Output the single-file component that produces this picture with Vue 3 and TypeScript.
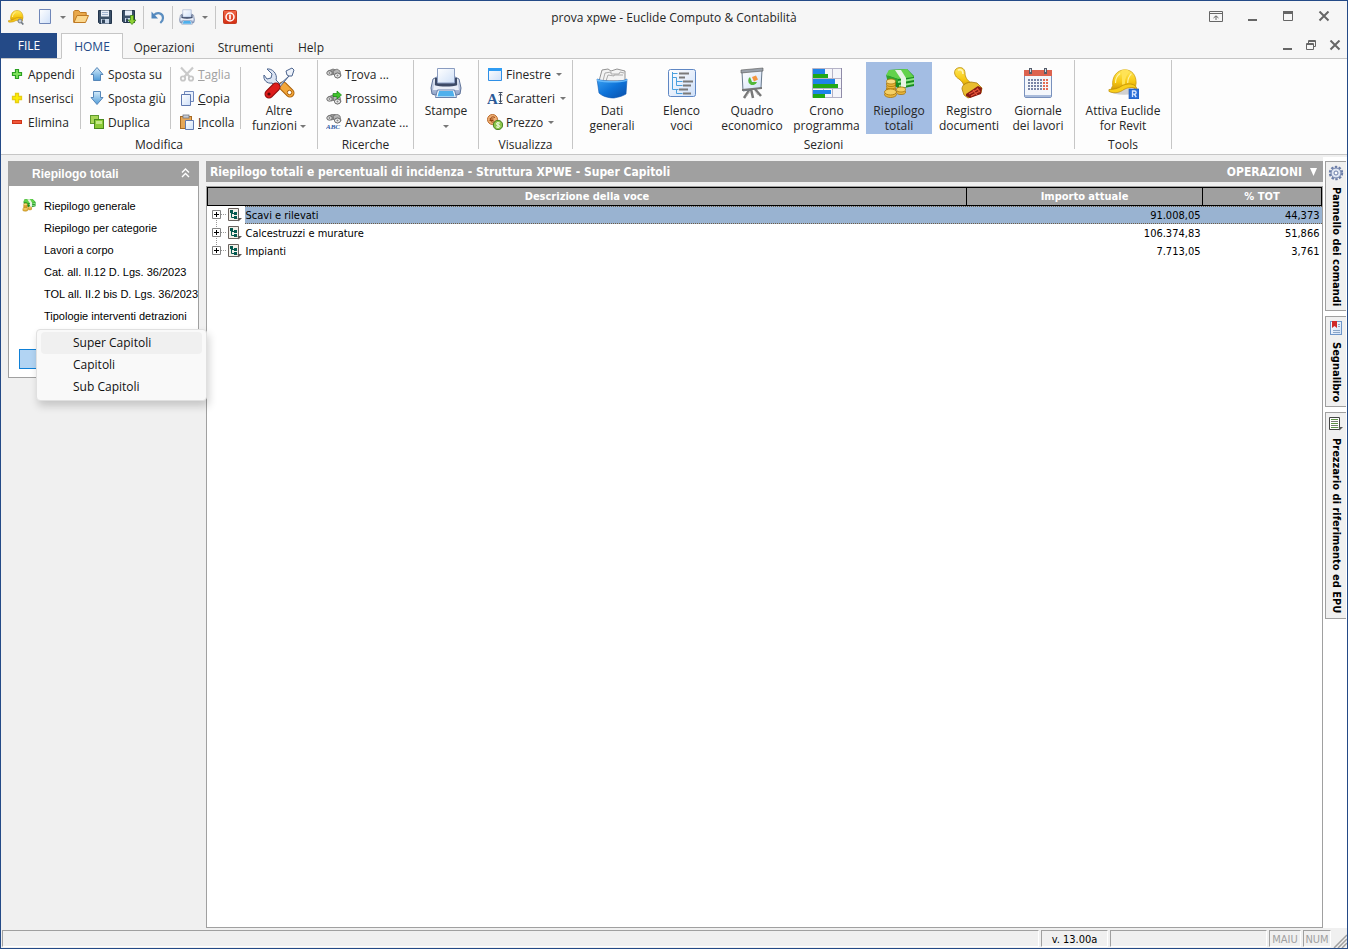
<script setup lang="ts">
import { ref } from 'vue'

interface Action { icon: string; label: string; key?: string; caret?: boolean; disabled?: boolean }
interface Section { icon: string; lines: [string, string]; width: string }
interface Row { name: string; amount: string; percent: string }

const tabs = ['Operazioni', 'Strumenti', 'Help']

const editColumns: Action[][] = [
  [
    { icon: 'plus-green', label: 'Appendi' },
    { icon: 'plus-yellow', label: 'Inserisci' },
    { icon: 'minus', label: 'Elimina' },
  ],
  [
    { icon: 'up', label: 'Sposta su' },
    { icon: 'down', label: 'Sposta giù' },
    { icon: 'duplicate', label: 'Duplica' },
  ],
  [
    { icon: 'cut', label: 'aglia', key: 'T', disabled: true },
    { icon: 'copy', label: 'opia', key: 'C' },
    { icon: 'paste', label: 'ncolla', key: 'I' },
  ],
]

const searchActions: Action[] = [
  { icon: 'find', label: 'Trova ...' },
  { icon: 'find-next', label: 'Prossimo' },
  { icon: 'find-abc', label: 'Avanzate ...' },
]

const viewActions: Action[] = [
  { icon: 'window', label: 'Finestre', caret: true },
  { icon: 'font', label: 'Caratteri', caret: true },
  { icon: 'price', label: 'Prezzo', caret: true },
]

const sections: Section[] = [
  { icon: 'files', lines: ['Dati', 'generali'], width: 'w68' },
  { icon: 'outline', lines: ['Elenco', 'voci'], width: 'w71' },
  { icon: 'board', lines: ['Quadro', 'economico'], width: 'w70' },
  { icon: 'gantt', lines: ['Crono', 'programma'], width: 'w79' },
  { icon: 'money', lines: ['Riepilogo', 'totali'], width: 'w66' },
  { icon: 'stamp', lines: ['Registro', 'documenti'], width: 'w74' },
  { icon: 'calendar', lines: ['Giornale', 'dei lavori'], width: 'w64' },
]
const activeSection = ref('money')

const navItems = [
  'Riepilogo generale',
  'Riepilogo per categorie',
  'Lavori a corpo',
  'Cat. all. II.12 D. Lgs. 36/2023',
  'TOL all. II.2 bis D. Lgs. 36/2023',
  'Tipologie interventi detrazioni',
]

const menuItems = ['Super Capitoli', 'Capitoli', 'Sub Capitoli']
const activeMenu = ref(0)

const rows: Row[] = [
  { name: 'Scavi e rilevati', amount: '91.008,05', percent: '44,373' },
  { name: 'Calcestruzzi e murature', amount: '106.374,83', percent: '51,866' },
  { name: 'Impianti', amount: '7.713,05', percent: '3,761' },
]
const selectedRow = ref(0)

const sideTabs = [
  { icon: 'gear', label: 'Pannello dei comandi' },
  { icon: 'bookmark', label: 'Segnalibro' },
  { icon: 'pricelist', label: 'Prezzario di riferimento ed EPU' },
]
</script>

<template>
  <svg class="sprites" width="0" height="0" aria-hidden="true">
    <defs>
      <linearGradient id="gYellow" x1="0" y1="0" x2="0" y2="1"><stop offset="0" stop-color="#ffe95c" /><stop offset="0.55" stop-color="#f7c812" /><stop offset="1" stop-color="#c98f04" /></linearGradient>
      <linearGradient id="gBlue" x1="0" y1="0" x2="0" y2="1"><stop offset="0" stop-color="#d5ecfa" /><stop offset="1" stop-color="#4f9bd8" /></linearGradient>
      <linearGradient id="gDeep" x1="0" y1="0" x2="1" y2="1"><stop offset="0" stop-color="#3aa0f2" /><stop offset="0.5" stop-color="#0d72d8" /><stop offset="1" stop-color="#0a4ea8" /></linearGradient>
      <linearGradient id="gPaper" x1="0" y1="0" x2="1" y2="1"><stop offset="0" stop-color="#ffffff" /><stop offset="1" stop-color="#cfe0f8" /></linearGradient>
      <linearGradient id="gSteel" x1="0" y1="0" x2="0" y2="1"><stop offset="0" stop-color="#f2f5fb" /><stop offset="1" stop-color="#8fa2c8" /></linearGradient>
      <linearGradient id="gRed" x1="0" y1="0" x2="0" y2="1"><stop offset="0" stop-color="#f26a4a" /><stop offset="1" stop-color="#d32d12" /></linearGradient>
    </defs>

    <symbol id="i-helmet" viewBox="0 0 32 32">
      <ellipse cx="17" cy="26" rx="14" ry="3.500" fill="#9b9b9b" opacity=".45" />
      <path d="M5 20C4 10 10 3 18 3c8 0 12 6 12 14l-1 6c-4-2-9-2-12 0-4 3-9 4-13 3-1-1-1-3 1-6z" fill="url(#gYellow)" stroke="#c99a0b" stroke-width=".8" />
      <path d="M1 24c5 0 10-1 14-4 4-2 10-3 14 0l2 3c-6-2-10-1-14 1-4 3-10 5-16 2z" fill="#f9ce1c" stroke="#b98705" stroke-width=".7" />
      <path d="M14 4c3-2 7-2 9 1-3 3-5 7-5 13l-3 1c0-6 0-11-1-15z" fill="#ffe356" />
      <path d="M8 17c0-5 2-8 5-10M21 17c0-5 2-8 4-10" stroke="#fff3a5" stroke-width="1.200" fill="none" />
    </symbol>
    <symbol id="i-app" viewBox="0 0 16 16">
      <path d="M2.500 10C2.500 5 5 1.500 9 1.500c4 0 6 3 6 7.500l-1 2-6-.5-4 2z" fill="url(#gYellow)" stroke="#d0a010" stroke-width=".6" />
      <path d="M.5 11.500C4 11.500 6 10 8 9c2-.8 5-.8 6.500.5V12L8 11.500c-2 1.500-5 2-7.500 1.500z" fill="#f4c517" stroke="#c08d08" stroke-width=".5" />
      <path d="M4.500 8c0-2.500 1.500-4 3-4.800" stroke="#fff3a5" fill="none" />
      <circle cx="12" cy="12" r="2" fill="#c7ced6" stroke="#78818d" /><path d="M13.300 13.300l2 2.200" stroke="#6d7680" stroke-width="1.700" />
    </symbol>
    <symbol id="i-revit" viewBox="0 0 32 32">
      <use href="#i-helmet" width="32" height="30" />
      <rect x="22" y="22" width="10" height="10" fill="#2c6fd8" stroke="#1c54b4" stroke-width=".6" />
      <path d="M25.500 30v-6h2a1.500 1.500 0 0 1 0 3.200h-2m1.700 0l2 2.800" stroke="#dce9ff" stroke-width="1.300" fill="none" />
    </symbol>
    <symbol id="i-new" viewBox="0 0 16 16"><path d="M2.500 .5h11v14h-11z" fill="url(#gPaper)" stroke="#6f86b8" /></symbol>
    <symbol id="i-open" viewBox="0 0 16 16">
      <path d="M.7 13.500V2.500l1-1h4l1.500 2h6v3" fill="#e9a94c" stroke="#bf7a24" />
      <path d="M1 13.500L4 6.500h11.500l-3 7z" fill="#fbd78d" stroke="#bf7a24" />
    </symbol>
    <symbol id="i-save" viewBox="0 0 16 16">
      <path d="M1.500 1.500h13v13h-12l-1-1z" fill="#3b5068" stroke="#22344b" />
      <path d="M4 1.500h8v6H4z" fill="#e8eef8" /><path d="M4 10h8v4.500H4z" fill="#c9d7ea" /><path d="M5 10.500h3v3.500H5z" fill="#33475f" />
      <path d="M5 3.500h6M5 5.500h6" stroke="#8fa6c6" stroke-width=".8" />
    </symbol>
    <symbol id="i-saveas" viewBox="0 0 16 16">
      <path d="M1.500 1.500h12v12h-11l-1-1z" fill="#3b5068" stroke="#22344b" />
      <path d="M4 1.500h7v5H4z" fill="#e8eef8" /><path d="M4 9h6v4H4z" fill="#c9d7ea" /><path d="M5 9.500h2V13H5z" fill="#33475f" />
      <path d="M9.500 6.500h3V11H15l-4 4.500L7 11h2.500z" fill="#8fd136" stroke="#3f8a12" stroke-width=".8" />
    </symbol>
    <symbol id="i-undo" viewBox="0 0 16 16">
      <path d="M4 6C7 3 13 3.500 13 9c0 2.500-1 3.700-2.700 5" stroke="#5b8ec0" stroke-width="2.200" fill="none" />
      <path d="M1.500 2.500v7h6.500z" fill="#4f86bd" />
    </symbol>
    <symbol id="i-printer" viewBox="0 0 32 32">
      <path d="M3 12l4-2h18l4 2 2 9-1 6-3 1H5l-3-1-1-6z" fill="url(#gSteel)" stroke="#5e7299" />
      <path d="M5 11h22v8c-6 2-16 2-22 0z" fill="#3d4a66" />
      <path d="M7.500 16V1.500h17V16z" fill="url(#gPaper)" stroke="#8a9cc0" />
      <path d="M4 18c7 2 17 2 24 0l1 5H3z" fill="#e9eef8" />
      <path d="M7.500 23h17l2 7.500h-21z" fill="#f8fbff" stroke="#6880ab" />
      <path d="M9 24h14l1.500 5.500h-17z" fill="#4fb0ec" />
    </symbol>
    <symbol id="i-power" viewBox="0 0 16 16">
      <rect x="1.500" y="1.500" width="13" height="13" rx="1" fill="url(#gRed)" stroke="#c43b20" />
      <circle cx="8" cy="8" r="4" fill="none" stroke="#fff" stroke-width="1.500" /><path d="M8 5.500v5" stroke="#fff" stroke-width="1.700" />
    </symbol>
    <symbol id="i-plus-green" viewBox="0 0 16 16"><path d="M6.500 3.500h3v3h3v3h-3v3h-3v-3h-3v-3h3z" fill="#7fe35c" stroke="#2ba022" stroke-width="1.200" /></symbol>
    <symbol id="i-plus-yellow" viewBox="0 0 16 16"><path d="M6.500 3.500h3v3h3v3h-3v3h-3v-3h-3v-3h3z" fill="#fff000" stroke="#e6cd14" stroke-width="1.300" /></symbol>
    <symbol id="i-minus" viewBox="0 0 16 16"><rect x="3.500" y="6.500" width="9" height="3" fill="#f0573a" stroke="#cf3519" /></symbol>
    <symbol id="i-up" viewBox="0 0 16 16"><path d="M8 1.500l6 7h-2.500v6h-7v-6H2z" fill="url(#gBlue)" stroke="#5686b8" /></symbol>
    <symbol id="i-down" viewBox="0 0 16 16"><path d="M8 14.500l6-7h-2.500v-6h-7v6H2z" fill="url(#gBlue)" stroke="#5686b8" /></symbol>
    <symbol id="i-duplicate" viewBox="0 0 16 16">
      <rect x="1.500" y="1.500" width="8" height="8" fill="#a8d657" stroke="#5f9a2d" /><rect x="5.500" y="5.500" width="9" height="9" fill="#8bc936" stroke="#4a8a1d" />
      <path d="M7 7h6v3H7z" fill="#c3e885" />
    </symbol>
    <symbol id="i-cut" viewBox="0 0 16 16">
      <path d="M2 1.500l8.500 9M14 1.500l-8.500 9" stroke="#cacaca" stroke-width="2.200" />
      <circle cx="4" cy="12.500" r="2.200" fill="none" stroke="#c6c6c6" stroke-width="1.800" /><circle cx="12" cy="12.500" r="2.200" fill="none" stroke="#c6c6c6" stroke-width="1.800" />
    </symbol>
    <symbol id="i-copy" viewBox="0 0 16 16"><path d="M5.500 1.500h9v10h-9z" fill="#e8f0fc" stroke="#7088bd" /><path d="M2.500 4.500h9v11h-9z" fill="url(#gPaper)" stroke="#6079b0" /></symbol>
    <symbol id="i-paste" viewBox="0 0 16 16">
      <rect x="1.500" y="2.500" width="11" height="12" fill="#e6a757" stroke="#a76a23" /><rect x="4" y="1" width="6" height="3" fill="#c7cbd4" stroke="#70757f" stroke-width=".8" />
      <path d="M6.500 6.500h8v9h-8z" fill="url(#gPaper)" stroke="#6079b0" />
    </symbol>
    <symbol id="i-tools" viewBox="0 0 32 32">
      <path d="M20 19l7 7" stroke="#a85e06" stroke-width="9" stroke-linecap="round" /><path d="M20 19l7 7" stroke="#f2a63a" stroke-width="7" stroke-linecap="round" />
      <path d="M4 2l5 5-1 4-4 1-3-4c-1 5 3 9 8 8l6 5 3-3-5-5c2-6-4-12-9-11z" fill="#dbe4f3" stroke="#4c648e" />
      <path d="M15 19L26 9l-2-1-1-4 6-3 2 2-2 6-3 0L16 21z" fill="#edf2fa" stroke="#4c648e" />
      <path d="M13 20l-7 7" stroke="#8b0b0b" stroke-width="9" stroke-linecap="round" /><path d="M13 20l-7 7" stroke="#dd1c1c" stroke-width="7" stroke-linecap="round" />
      <circle cx="6" cy="27" r="1.600" fill="#5b0808" /><circle cx="26.500" cy="25.500" r="2.200" fill="#fff" stroke="#a85e06" />
    </symbol>
    <symbol id="i-find" viewBox="0 0 16 16">
      <path d="M2 5l5-2 3 1-1 4-4 1z" fill="#999" stroke="#666" stroke-width=".7" /><path d="M7 5l4-2 3 2 1 5-4 2-3-3z" fill="#b5b5b5" stroke="#666" stroke-width=".7" />
      <ellipse cx="3.500" cy="7" rx="2.700" ry="2.200" fill="#e4e4e4" stroke="#5a5a5a" stroke-width=".9" /><ellipse cx="11.500" cy="9.500" rx="3" ry="2.500" fill="#ececec" stroke="#5a5a5a" stroke-width=".9" />
      <circle cx="11.500" cy="9.500" r="1" fill="#888" /><circle cx="3.500" cy="7" r=".9" fill="#888" />
    </symbol>
    <symbol id="i-find-next" viewBox="0 0 16 16">
      <use href="#i-find" y="2" width="16" height="16" /><path d="M7 3.500h4V1l4.500 4L11 9V6.500H7z" fill="#3fc32b" stroke="#168511" stroke-width=".7" />
    </symbol>
    <symbol id="i-find-abc" viewBox="0 0 16 16"><use href="#i-find" y="-3" width="16" height="16" /></symbol>
    <symbol id="i-window" viewBox="0 0 16 16"><path d="M1.500 2.500h13v12h-13z" fill="url(#gPaper)" stroke="#2f8fe6" /><path d="M1 2h14v3H1z" fill="#2f9cf2" /></symbol>
    <symbol id="i-font" viewBox="0 0 16 16">
      <path d="M13.500 4v8M11.500 2.500h4M11.500 13.500h4M12 5.500l1.500-2 1.500 2M12 10.500l1.500 2 1.500-2" stroke="#3d4b60" fill="none" />
    </symbol>
    <symbol id="i-price" viewBox="0 0 16 16">
      <circle cx="5.500" cy="5.500" r="5" fill="#f0b277" stroke="#b9692a" /><path d="M8 3.500c-3-1.500-4.500 0-4.500 2s1.500 3.500 4 2M2.500 5h4M2.500 6.500h4" stroke="#96410d" fill="none" />
      <circle cx="11" cy="11" r="4.700" fill="#8cc64b" stroke="#437d1f" /><path d="M13 9.200c-2-1-3.700-.5-3.700.7 0 1.500 3.500.8 3.500 2.300 0 1.200-2 1.500-3.800.6M11 8v6" stroke="#f4fbe8" fill="none" />
    </symbol>
    <symbol id="i-files" viewBox="0 0 32 32">
      <path d="M3 14L6 3l6-1 3 2 6-2 8 2v10z" fill="#f3f3f3" stroke="#777" stroke-width=".8" /><path d="M7 14l2-8 6-1v2h8l1-2 4 1M10 14l2-6 6 1v-1h9" fill="none" stroke="#999" stroke-width=".8" />
      <path d="M1 12c5 2 11 2 16 2 6 0 11 0 14-2l-1 15c-3 2-7 3-12 4-6 0-12-2-15-5z" fill="url(#gDeep)" stroke="#0b58b4" stroke-width=".6" />
      <path d="M1 12c5 2 11 2 16 2 6 0 11 0 14-2v2c-8 2-22 2-30 0z" fill="#65b9fb" />
    </symbol>
    <symbol id="i-outline" viewBox="0 0 32 32">
      <rect x="2.500" y="2.500" width="27" height="27" rx="2" fill="url(#gPaper)" stroke="#5f87c4" />
      <path d="M6.500 5v17.500h6M6.500 6.500h5M6.500 10.500h4v8h6M10.500 14.500h6M10.500 22v4.500h6" fill="none" stroke="#4aa0de" />
      <path d="M13 6.500h10M13 10.500h6M17 14.500h10M17 18.500h8M13 22.500h9M17 26.500h8" stroke="#7a7a7a" stroke-width="2" />
    </symbol>
    <symbol id="i-board" viewBox="0 0 32 32">
      <path d="M14 22l-6 9M18 21l7 8M15 22l2 9" stroke="#777" stroke-width="2.500" /><path d="M14 24l-4 6M19 24l3 4" stroke="#bbb" stroke-width="1" />
      <path d="M6 5l20-2-1 18-18 3z" fill="url(#gPaper)" stroke="#68788a" /><path d="M5 3l22-2v3L5 6z" fill="#9ba2ab" stroke="#555" stroke-width=".6" />
      <path d="M14 10a4.500 4.500 0 1 0 7 5h-5z" fill="#51b83b" /><path d="M16 10l4-1.500 2 4-4 2z" fill="#f4953f" /><path d="M6 22l20-2v2L6 24z" fill="#777" />
    </symbol>
    <symbol id="i-gantt" viewBox="0 0 32 32">
      <path d="M1.500 1.500h29v29h-29zM12.500 1v30M21.500 1v30M1 11.500h30M1 21.500h30" fill="#f5f5fa" stroke="#b5b3c7" /><path d="M30.500 1v30" stroke="#8f8ba8" />
      <path d="M2 2h12v5H2zM2 12h22v5H2zM2 23h18v4H2z" fill="#1f83e8" /><path d="M2 7h15v4H2zM2 17h25v4H2zM2 27h12v4H2z" fill="#22a818" />
    </symbol>
    <symbol id="i-money" viewBox="0 0 32 32">
      <path d="M6 3l18-1 7 7v10l-15 3L4 13z" fill="#178c20" /><path d="M6 3l18-1 7 8-16 2L3 8z" fill="#63d24b" /><path d="M15 14l16-3v2l-16 3zM16 18l15-3v2l-15 3z" fill="#8fe487" />
      <path d="M12 3h6l5 8v9l-5 1v-9z" fill="#e9f3e6" /><path d="M3 8l12 4v4L4 12z" fill="#2fa52c" />
      <g fill="#e9b63c" stroke="#a87308" stroke-width=".8">
        <ellipse cx="18" cy="25" rx="4.500" ry="2.500" /><ellipse cx="18" cy="22.500" rx="4.500" ry="2.500" fill="#f5cf64" />
        <ellipse cx="8" cy="22" rx="4.500" ry="2.500" /><ellipse cx="8" cy="19.500" rx="4.500" ry="2.500" /><ellipse cx="8" cy="17" rx="4.500" ry="2.500" /><ellipse cx="8" cy="14.500" rx="4.500" ry="2.500" fill="#f9dc83" />
        <ellipse cx="7.500" cy="27.500" rx="6" ry="3" /><ellipse cx="7.500" cy="25" rx="6" ry="3" fill="#f5cf64" />
      </g>
    </symbol>
    <symbol id="i-stamp" viewBox="0 0 32 32">
      <path d="M3 2c4-3 9-1 9 4 0 4 2 7 6 10l-6 6c-1-5-3-8-6-10C2 10 0 5 3 2z" fill="url(#gYellow)" stroke="#b98a10" stroke-width=".8" />
      <path d="M9 22c0-3 2-6 9-7l6 1 5 5-1 5-13 5-4-3z" fill="#e9bd2f" stroke="#a87a0b" stroke-width=".8" /><path d="M13 27l12-8 4 2-1 6-11 4-4-2z" fill="#8a1a12" />
      <path d="M16 27l9-5M18 29l9-5M20 23l4 5M24 21l3 4" stroke="#e8563c" stroke-width="1.200" /><path d="M5 3c3-1 5 0 5 4" fill="none" stroke="#fff5bd" stroke-width="1.500" />
    </symbol>
    <symbol id="i-calendar" viewBox="0 0 32 32">
      <rect x="2.500" y="3.500" width="27" height="27" rx="1.500" fill="#f4f7fc" stroke="#7991bd" /><path d="M2 3h28v6H2z" fill="#dc6350" /><path d="M3 28h26v2H3z" fill="#a9bbdb" />
      <path d="M6 13h15M6 16h15M6 19h15M6 22h15" stroke="#7884a6" stroke-width="2" stroke-dasharray="2 1" /><path d="M21 13h6M21 16h6M21 19h6M21 22h6" stroke="#e36a55" stroke-width="2" stroke-dasharray="2 1" />
      <path d="M8.500 1v6M23.500 1v6" stroke="#555d6b" stroke-width="3" /><path d="M8.500 2v3M23.500 2v3" stroke="#d5dae3" stroke-width="1" />
    </symbol>
    <symbol id="i-tree" viewBox="0 0 14 14">
      <path d="M.5 .5h10v12H.5z" fill="#f2f0e9" stroke="#6a625e" /><path d="M2 2h3v3H2zM6 4h3v3H6zM6 8h3v3H6z" fill="#04594f" /><path d="M3.500 5v4.500H7M3.500 5.500H7" stroke="#04594f" fill="none" />
      <path d="M9.500 10H14l-3.500 3.500z" fill="#5b5552" />
    </symbol>
    <symbol id="i-gear" viewBox="0 0 16 16">
      <circle cx="8" cy="8" r="6.200" fill="none" stroke="#6b7da8" stroke-width="2" stroke-dasharray="2.400 1.500" /><circle cx="8" cy="8" r="5" fill="#dfe6f3" stroke="#6b7da8" /><circle cx="8" cy="8" r="2" fill="#fff" stroke="#6b7da8" />
    </symbol>
    <symbol id="i-bookmark" viewBox="0 0 16 16">
      <rect x="2.500" y="1.500" width="11" height="13" fill="url(#gPaper)" stroke="#6f96c9" /><path d="M4 1h5v7L6.500 6 4 8z" fill="#d02a2a" /><path d="M10 4.500h2M10 6.500h2M5 10.500h7M5 12.500h7" stroke="#8ba5c7" />
    </symbol>
    <symbol id="i-pricelist" viewBox="0 0 16 16">
      <path d="M1.500 1.500h10v12h-10z" fill="#fff" stroke="#444" /><path d="M3 3.500h7M3 7.500h7M3 11.500h7" stroke="#5c8f45" /><path d="M3 5.500h7M3 9.500h7" stroke="#777" /><path d="M10.500 11H15l-3.500 3.500z" fill="#555" />
    </symbol>
  </svg>

  <div class="window">
    <header class="titlebar">
      <div class="quick">
        <button class="q app" aria-label="Euclide"><svg class="s16"><use href="#i-app" /></svg></button>
        <button class="q new" aria-label="Nuovo"><svg class="s16"><use href="#i-new" /></svg></button>
        <button class="q qc" aria-label="Opzioni nuovo"><i class="caret"></i></button>
        <button class="q wide" aria-label="Apri"><svg class="s16"><use href="#i-open" /></svg></button>
        <button class="q wide" aria-label="Salva"><svg class="s16"><use href="#i-save" /></svg></button>
        <button class="q" aria-label="Salva con nome"><svg class="s16"><use href="#i-saveas" /></svg></button>
        <span class="qsep"></span>
        <button class="q" aria-label="Annulla"><svg class="s16"><use href="#i-undo" /></svg></button>
        <span class="qsep"></span>
        <button class="q new" aria-label="Stampa"><svg class="s16"><use href="#i-printer" /></svg></button>
        <button class="q qc" aria-label="Opzioni stampa"><i class="caret"></i></button>
        <span class="qsep"></span>
        <button class="q" aria-label="Esci"><svg class="s16"><use href="#i-power" /></svg></button>
      </div>
      <div class="title">prova xpwe - Euclide Computo &amp; Contabilità</div>
      <div class="controls">
        <button aria-label="Comprimi barra"><svg width="14" height="12" viewBox="0 0 14 12"><path d="M.5 .5h13v10H.5zM.5 2.500h13M7 9V5M4.500 7L7 4.800 9.500 7" fill="none" stroke="#666" /></svg></button>
        <button aria-label="Riduci"><svg width="12" height="12" viewBox="0 0 12 12"><path d="M2 8h9v2H2z" fill="#666" /></svg></button>
        <button aria-label="Ingrandisci"><svg width="12" height="12" viewBox="0 0 12 12"><path d="M1.500 .5h9v9h-9z" fill="none" stroke="#666" /><path d="M1 0h10v3H1z" fill="#666" /></svg></button>
        <button aria-label="Chiudi"><svg width="12" height="12" viewBox="0 0 12 12"><path d="M1.500 .5l9 9M10.500 .5l-9 9" stroke="#666" stroke-width="2" /></svg></button>
      </div>
    </header>

    <nav class="tabs">
      <button class="tab file">FILE</button>
      <button class="tab home">HOME</button>
      <button v-for="t in tabs" :key="t" class="tab" :class="t.toLowerCase()">{{ t }}</button>
      <div class="mdi">
        <button aria-label="Riduci documento"><svg width="12" height="12" viewBox="0 0 12 12"><path d="M2 8h9v2H2z" fill="#666" /></svg></button>
        <button aria-label="Ripristina documento"><svg width="12" height="12" viewBox="0 0 12 12"><path d="M1.500 3.500h7v6h-7zM3.500 3V.5h7v6H9M1 4.500h8M3 1.500h8" fill="none" stroke="#666" /></svg></button>
        <button aria-label="Chiudi documento"><svg width="12" height="12" viewBox="0 0 12 12"><path d="M1.500 .5l9 9M10.500 .5l-9 9" stroke="#666" stroke-width="2" /></svg></button>
      </div>
    </nav>

    <div class="ribbon">
      <section class="group g-edit">
        <div class="body">
          <div v-for="(col, i) in editColumns" :key="i" class="col" :class="'c' + i">
            <button v-for="a in col" :key="a.icon" class="small" :disabled="a.disabled">
              <svg class="s16"><use :href="'#i-' + a.icon" /></svg><span><u v-if="a.key">{{ a.key }}</u>{{ a.label }}</span>
            </button>
          </div>
          <button class="big more">
            <svg class="s32"><use href="#i-tools" /></svg>
            <span>Altre<br />funzioni <i class="caret"></i></span>
          </button>
        </div>
        <div class="caption">Modifica</div>
      </section>
      <section class="group g-search">
        <div class="body">
          <div class="col">
            <button v-for="a in searchActions" :key="a.icon" class="small">
              <svg class="s16"><use :href="'#i-' + a.icon" /><text v-if="a.icon === 'find-abc'" class="abc" x="0" y="15">ABC</text></svg>
              <span v-if="a.icon === 'find'">T<u>r</u>ova ...</span><span v-else>{{ a.label }}</span>
            </button>
          </div>
        </div>
        <div class="caption">Ricerche</div>
      </section>
      <section class="group g-print">
        <div class="body">
          <button class="big"><svg class="s32"><use href="#i-printer" /></svg><span>Stampe<br /><i class="caret"></i></span></button>
        </div>
      </section>
      <section class="group g-view">
        <div class="body">
          <div class="col">
            <button v-for="a in viewActions" :key="a.icon" class="small">
              <svg class="s16"><use :href="'#i-' + a.icon" /><text v-if="a.icon === 'font'" class="letter" x="0" y="14">A</text></svg>
              <span>{{ a.label }}</span><i class="caret"></i>
            </button>
          </div>
        </div>
        <div class="caption">Visualizza</div>
      </section>
      <section class="group g-sections">
        <div class="body">
          <button
            v-for="s in sections" :key="s.icon" class="big" :class="[s.width, { active: s.icon === activeSection }]"
            @click="activeSection = s.icon"
          >
            <svg class="s32"><use :href="'#i-' + s.icon" /></svg><span>{{ s.lines[0] }}<br />{{ s.lines[1] }}</span>
          </button>
        </div>
        <div class="caption">Sezioni</div>
      </section>
      <section class="group g-tools">
        <div class="body">
          <button class="big"><svg class="s32"><use href="#i-revit" /></svg><span>Attiva Euclide<br />for Revit</span></button>
        </div>
        <div class="caption">Tools</div>
      </section>
    </div>

    <div class="workspace">
      <aside class="side">
        <div class="panel">
          <div class="panel-head">
            <span>Riepilogo totali</span>
            <button aria-label="Comprimi pannello"><svg width="9" height="10" viewBox="0 0 9 10"><path d="M1 4.500L4.500 1 8 4.500M1 9l3.500-3.500L8 9" fill="none" stroke="#fff" stroke-width="1.400" /></svg></button>
          </div>
          <div class="panel-body">
            <a v-for="(n, i) in navItems" :key="n" class="nav" href="#">
              <svg v-if="i === 0" class="s14"><use href="#i-money" /></svg>{{ n }}
            </a>
            <div class="structure">
              <button class="structure-btn" aria-label="Struttura"></button>
              <div class="menu" role="menu">
                <button
                  v-for="(m, i) in menuItems" :key="m" role="menuitem" :class="{ hot: i === activeMenu }"
                  @click="activeMenu = i"
                >{{ m }}</button>
              </div>
            </div>
          </div>
        </div>
      </aside>

      <main class="main">
        <div class="main-head">
          <span>Riepilogo totali e percentuali di incidenza - Struttura XPWE - Super Capitoli</span>
          <button>OPERAZIONI <svg width="7" height="8" viewBox="0 0 7 8"><path d="M0 0h7L3.500 8z" fill="#fff" /></svg></button>
        </div>
        <div class="sheet">
          <table>
            <colgroup><col /><col class="amount" /><col class="percent" /></colgroup>
            <thead>
              <tr><th>Descrizione della voce</th><th>Importo attuale</th><th>% TOT</th></tr>
            </thead>
            <tbody>
              <tr v-for="(r, i) in rows" :key="r.name" :class="{ selected: i === selectedRow }" @click="selectedRow = i">
                <td>
                  <div class="node">
                    <svg class="branch" width="37" height="18" viewBox="1 0 37 18">
                      <path v-if="i > 0" d="M9.500 0v4" stroke="#999" stroke-dasharray="1 1" /><path v-if="i < rows.length - 1" d="M9.500 14v4" stroke="#999" stroke-dasharray="1 1" />
                      <path d="M14 8.500h6" stroke="#999" stroke-dasharray="1 1" />
                      <path d="M5.500 4.500h8v8h-8z" fill="#fff" stroke="#848484" /><path d="M7 8.500h5M9.500 6v5" stroke="#000" />
                      <use href="#i-tree" x="21" y="2" width="14" height="14" />
                    </svg>
                    <span>{{ r.name }}</span>
                  </div>
                </td>
                <td class="num">{{ r.amount }}</td>
                <td class="num">{{ r.percent }}</td>
              </tr>
            </tbody>
          </table>
        </div>
      </main>

      <nav class="rail">
        <button v-for="s in sideTabs" :key="s.icon"><svg class="s16"><use :href="'#i-' + s.icon" /></svg>{{ s.label }}</button>
      </nav>
    </div>

    <footer class="status">
      <span class="cell grow"></span>
      <span class="cell version">v. 13.00a</span>
      <span class="cell blank"></span>
      <span class="cell key caps">MAIU</span>
      <span class="cell key">NUM</span>
      <svg class="grip" width="14" height="14" viewBox="0 0 14 14"><path d="M1 14L14 1M5 14l9-9M9 14l5-5" stroke="#a0a0a0" stroke-width="1.500" /></svg>
    </footer>
  </div>
</template>

<style>
body { margin: 0; }
</style>

<style scoped>
.sprites { position: absolute; }
button { margin: 0; padding: 0; border: 0; background: none; font: inherit; color: inherit; white-space: nowrap; }
.window {
  box-sizing: border-box; min-height: 100vh; display: flex; flex-direction: column;
  border: 1px solid #244a87; background: #f0f0f0; color: #262626;
  font: 12px/15px "Open Sans", "Noto Sans", sans-serif;
}
.s16 { width: 16px; height: 16px; flex: none; }
.s32 { width: 32px; height: 32px; flex: none; }
.s14 { width: 14px; height: 14px; flex: none; }
.abc { font: italic bold 7px "Liberation Serif", serif; fill: #2d5ba5; }
.letter { font: bold 15px "Liberation Serif", serif; fill: #2a5a97; }
.caret { display: inline-block; width: 0; height: 0; border: 3px solid transparent; border-top-color: #777; border-bottom: 0; vertical-align: middle; }

.titlebar { display: grid; grid-template-columns: 1fr auto 1fr; align-items: center; height: 32px; background: #f6f6f6; }
.quick { display: flex; align-items: center; padding-left: 7px; }
.q { flex: none; width: 22px; height: 22px; display: flex; align-items: center; }
.q.app { width: 29px; }
.q.new { width: 23px; }
.q.wide { width: 24px; }
.q.qc { width: 13px; }
.qsep { width: 1px; height: 23px; margin-right: 6px; background: #c6c6c6; }
.title { text-align: center; }
.controls { display: flex; justify-content: flex-end; padding-right: 5px; }
.controls button { width: 36px; height: 22px; display: flex; align-items: center; justify-content: center; }

.tabs { display: flex; height: 26px; background: #f6f6f6; }
.tab { box-sizing: border-box; height: 26px; padding: 3px 0 0; border-bottom: 1px solid #c6c6c6; }
.tab.file { width: 60px; padding: 0; background: linear-gradient(#244a87, #244a87) left / 56px 100% no-repeat; color: #fff; padding-right: 4px; }
.tab.home { width: 62px; padding: 1px 0 0; border: 1px solid #c6c6c6; border-bottom-color: #fdfdfd; background: #fdfdfd; color: #244a87; }
.tab.operazioni { width: 82px; }
.tab.strumenti { width: 81px; }
.tab.help { width: 50px; }
.mdi { flex: 1; display: flex; justify-content: flex-end; border-bottom: 1px solid #c6c6c6; }
.mdi button { width: 24px; display: flex; align-items: center; justify-content: center; }

.ribbon { display: flex; height: 95px; background: #fdfdfd; border-bottom: 1px solid #c6c6c6; }
.group { display: flex; flex-direction: column; box-sizing: border-box; height: 89px; margin-top: 1px; padding-top: 2px; border-right: 1px solid #c6c6c6; }
.group .body { display: flex; height: 72px; flex: none; }
.caption { text-align: center; line-height: 16px; padding-top: 3px; }
.g-edit { width: 317px; }
.g-search { width: 96px; }
.g-print { width: 65px; }
.g-view { width: 94px; }
.g-sections { width: 502px; }
.g-sections .body { padding-left: 5px; }
.g-tools { width: 97px; }
.g-search .body, .g-view .body { padding-left: 8px; }
.g-print .big, .g-tools .big { flex: 1; }
.col { display: flex; flex-direction: column; }
.g-edit .col { box-sizing: border-box; padding-left: 8px; background: linear-gradient(#c6c6c6, #c6c6c6) right 5px / 1px 62px no-repeat; }
.c0 { width: 80px; }
.c1 { width: 90px; }
.c2 { width: 70px; }
.small { height: 24px; display: flex; align-items: center; gap: 3px; text-align: left; }
.small:disabled { color: #a0a0a0; }
.small .caret { margin-left: 2px; }
.big { display: flex; flex-direction: column; align-items: center; padding-top: 5px; gap: 4px; box-sizing: border-box; height: 72px; }
.big.more { flex: 1; }
.big.active { background: #a3bde3; }
.w64 { width: 64px; } .w66 { width: 66px; } .w68 { width: 68px; } .w70 { width: 70px; }
.w71 { width: 71px; } .w74 { width: 74px; } .w79 { width: 79px; }

.workspace { flex: 1; display: flex; padding-top: 2px; }
.side { flex: none; width: 191px; padding: 4px 7px 0; }
.panel-head { display: flex; align-items: center; justify-content: space-between; box-sizing: border-box; height: 25px; padding: 1px 9px 0 24px; background: #a0a0a0; color: #fff; font: bold 12px/15px "Liberation Sans", Arial, sans-serif; }
.panel-body { border: 1px solid #a0a0a0; border-top: 0; background: #fff; padding: 9px 0 8px; }
.nav { display: flex; align-items: center; position: relative; height: 22px; padding-left: 35px; color: #000; text-decoration: none; white-space: nowrap; font: 11px/22px "Liberation Sans", Arial, sans-serif; }
.nav svg { position: absolute; left: 13px; top: 3px; }
.structure { position: relative; margin: 22px 10px 0; }
.structure-btn { display: block; box-sizing: border-box; width: 100%; height: 20px; border: 1px solid #0f80d7; background: #b2d4f3; }
.menu { position: absolute; left: 17px; top: -20px; z-index: 2; padding: 2px 4px; background: #f9f9f9; border: 1px solid #e0e0e0; border-radius: 4px; box-shadow: 2px 5px 8px rgba(0, 0, 0, .18); color: #111; }
.menu button { display: block; width: 161px; height: 22px; padding-left: 32px; padding-bottom: 1px; text-align: left; border-radius: 4px; }
.menu .hot { background: #f0f0f0; }

.main { flex: 1; min-width: 0; display: flex; flex-direction: column; padding-top: 4px; font: 11px/14px "DejaVu Sans Condensed", "DejaVu Sans", sans-serif; }
.main-head { display: flex; align-items: center; justify-content: space-between; height: 21px; padding: 0 6px 0 4px; background: #a0a0a0; color: #fff; font-size: 12px; font-weight: bold; }
.main-head button { display: flex; align-items: center; gap: 8px; }
.sheet { flex: 1; margin-top: 4px; border: 1px solid #a0a0a0; background: #fff; }
table { width: 100%; border-collapse: collapse; table-layout: fixed; color: #000; }
col.amount { width: 236px; }
col.percent { width: 119px; }
th { height: 16px; padding: 1px 0 0; border: 1px solid #000; background: #a0a0a0; color: #fff; font-weight: bold; }
td { height: 18px; padding: 0; }
.node { display: flex; height: 18px; line-height: 19px; }
.node span { flex: 1; padding-left: 1px; }
.num { text-align: right; padding: 1px 2px 0 0; height: 17px; }
.selected .num, .selected .node span {
  background:
    repeating-linear-gradient(90deg, #6d5b45 0 1px, transparent 1px 2px) top / 100% 1px no-repeat,
    repeating-linear-gradient(90deg, #6d5b45 0 1px, transparent 1px 2px) bottom / 100% 1px no-repeat,
    #99b3d1;
}

.rail { flex: none; display: flex; flex-direction: column; align-items: flex-end; gap: 5px; width: 24px; padding-top: 4px; background: #fff; }
.rail button { writing-mode: vertical-rl; display: flex; align-items: center; gap: 6px; width: 21px; box-sizing: border-box; padding: 3px 1px 4px 0; margin-right: 1px; border: 1px solid #a0a0a0; border-right: 0; background: #f0f0f0; color: #000; font: bold 11px/14px "DejaVu Sans Condensed", "DejaVu Sans", sans-serif; }

.status { display: flex; align-items: center; gap: 2px; height: 20px; padding-left: 1px; font: 11px/14px "DejaVu Sans Condensed", "DejaVu Sans", sans-serif; color: #000; }
.cell { box-sizing: border-box; height: 17px; border: 1px solid #a0a0a0; border-right-color: #fff; border-bottom-color: #fff; text-align: center; line-height: 17px; }
.grow { flex: 1; }
.version { width: 67px; }
.blank { width: 157px; }
.key { width: 28px; color: #a0a0a0; }
.caps { width: 32px; }
.grip { align-self: flex-end; }
</style>
